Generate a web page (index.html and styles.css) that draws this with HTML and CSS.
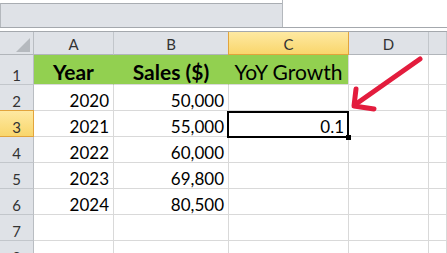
FILE: index.html
```html
<!DOCTYPE html>
<html lang="en">
<head>
  <meta charset="UTF-8" />
  <meta name="viewport" content="width=device-width, initial-scale=1.0"/>
  <title>YoY Growth</title>
  <link rel="stylesheet" href="styles.css">
</head>
<body>

  <div class="ribbon">
    <div class="ribbon-panel">
      <div class="ribbon-bar"></div>
    </div>
  </div>
  <div class="ribbon-gap"></div>

  <div class="sheet">
    <!-- column headers -->
    <div class="corner">
      <svg width="14" height="14" viewBox="0 0 14 14"><polygon points="14,0 14,14 0,14" fill="#b5b9be"/></svg>
    </div>
    <div class="col-head">A</div>
    <div class="col-head">B</div>
    <div class="col-head active">C</div>
    <div class="col-head">D</div>
    <div class="col-head"></div>

    <!-- row 1 -->
    <div class="row-head">1</div>
    <div class="cell title">Year</div>
    <div class="cell title">Sales ($)</div>
    <div class="cell title light">YoY Growth</div>
    <div class="cell"></div>
    <div class="cell"></div>

    <!-- row 2 -->
    <div class="row-head">2</div>
    <div class="cell num">2020</div>
    <div class="cell num">50,000</div>
    <div class="cell"></div>
    <div class="cell"></div>
    <div class="cell"></div>

    <!-- row 3 -->
    <div class="row-head active">3</div>
    <div class="cell num">2021</div>
    <div class="cell num">55,000</div>
    <div class="cell num selected">0.1
      <div class="sel-box"></div>
      <div class="fill-handle"></div>
    </div>
    <div class="cell"></div>
    <div class="cell"></div>

    <!-- row 4 -->
    <div class="row-head">4</div>
    <div class="cell num">2022</div>
    <div class="cell num">60,000</div>
    <div class="cell"></div>
    <div class="cell"></div>
    <div class="cell"></div>

    <!-- row 5 -->
    <div class="row-head">5</div>
    <div class="cell num">2023</div>
    <div class="cell num">69,800</div>
    <div class="cell"></div>
    <div class="cell"></div>
    <div class="cell"></div>

    <!-- row 6 -->
    <div class="row-head">6</div>
    <div class="cell num">2024</div>
    <div class="cell num">80,500</div>
    <div class="cell"></div>
    <div class="cell"></div>
    <div class="cell"></div>

    <!-- row 7 -->
    <div class="row-head">7</div>
    <div class="cell"></div>
    <div class="cell"></div>
    <div class="cell"></div>
    <div class="cell"></div>
    <div class="cell"></div>

    <!-- row 8 -->
    <div class="row-head">8</div>
    <div class="cell"></div>
    <div class="cell"></div>
    <div class="cell"></div>
    <div class="cell"></div>
    <div class="cell"></div>
  </div>

  <!-- hand drawn pointer to C3 -->
  <svg class="arrow" width="447" height="253" viewBox="0 0 447 253">
    <g fill="none" stroke="#e31c3d" stroke-width="5" stroke-linecap="round" stroke-linejoin="round">
      <path d="M420 59 L356 104"/>
      <path d="M356 89 L354 106 L374 109"/>
    </g>
  </svg>

</body>
</html>
```

FILE: styles.css
```css
body {
  font-family: Lato, "Liberation Sans", sans-serif;
  background-color: white;
  margin: 0;
  padding: 0;
  position: relative;
  width: 447px;
  height: 253px;
  overflow: hidden;
}

.ribbon {
  height: 28px;
  box-sizing: border-box;
  border-bottom: 1px solid #a4a8ad;
  display: flex;
}

.ribbon-panel {
  width: 283px;
  box-sizing: border-box;
  border-right: 1px solid #b4b8bd;
  display: flex;
  flex-direction: column;
  padding-top: 3px;
}

.ribbon-bar {
  flex: 1;
  background-color: #dfe2e7;
  border-top: 1px solid #a9adb2;
  border-left: 1px solid #b4b8bd;
}

.ribbon-gap {
  height: 3px;
}

.sheet {
  display: grid;
  grid-template-columns: 34px 80px 115px 120px 80px 1fr;
  grid-template-rows: 23px 30px repeat(7, 26px);
  border-top: 1px solid #a4a8ad;
}

.sheet > div {
  box-sizing: border-box;
  border-right: 1px solid #d9d9d9;
  border-bottom: 1px solid #d9d9d9;
}

.corner {
  background-color: #dfe2e7;
  border-right-color: #b9bdc2 !important;
  border-bottom-color: #b1b5ba !important;
  display: flex;
  align-items: flex-end;
  justify-content: flex-end;
  padding: 0 3px 2px 0;
}

.corner svg {
  display: block;
}

.col-head {
  background-color: #dfe2e7;
  border-right-color: #c2c6cb !important;
  border-bottom-color: #b1b5ba !important;
  color: #333;
  font-size: 15px;
  line-height: 16px;
  display: flex;
  align-items: flex-end;
  justify-content: center;
  padding-bottom: 2px;
}

.row-head {
  background-color: #dfe2e7;
  border-right-color: #b9bdc2 !important;
  border-bottom-color: #c2c6cb !important;
  color: #333;
  font-size: 15px;
  line-height: 18px;
  display: flex;
  align-items: flex-end;
  justify-content: center;
}

.col-head.active,
.row-head.active {
  background: linear-gradient(#fee9a2, #f9d66c);
  border-right-color: #e2a43c !important;
  border-bottom-color: #e2a43c !important;
}

.col-head.active {
  box-shadow: -1px 0 0 #e2a43c;
}

.row-head.active {
  box-shadow: 0 -1px 0 #e2a43c;
}

.cell {
  color: black;
  font-size: 17px;
  line-height: 18px;
  display: flex;
  align-items: flex-end;
  padding: 0 4px 0 4px;
  white-space: nowrap;
}

.cell.title {
  background-color: #92d050;
  border-right-color: #92d050 !important;
  justify-content: center;
  font-size: 21px;
  font-weight: bold;
  line-height: 24px;
  padding: 0;
}

.cell.title.light {
  font-weight: normal;
  border-right-color: #d9d9d9 !important;
}

.cell.num {
  justify-content: flex-end;
}

.selected {
  position: relative;
}

.sel-box {
  position: absolute;
  left: -2px;
  top: 0;
  width: 122px;
  height: 27px;
  box-sizing: border-box;
  border: 2px solid black;
}

.fill-handle {
  position: absolute;
  left: 117px;
  top: 24px;
  width: 5px;
  height: 5px;
  background-color: black;
}

.arrow {
  position: absolute;
  left: 0;
  top: 0;
  pointer-events: none;
}
```
